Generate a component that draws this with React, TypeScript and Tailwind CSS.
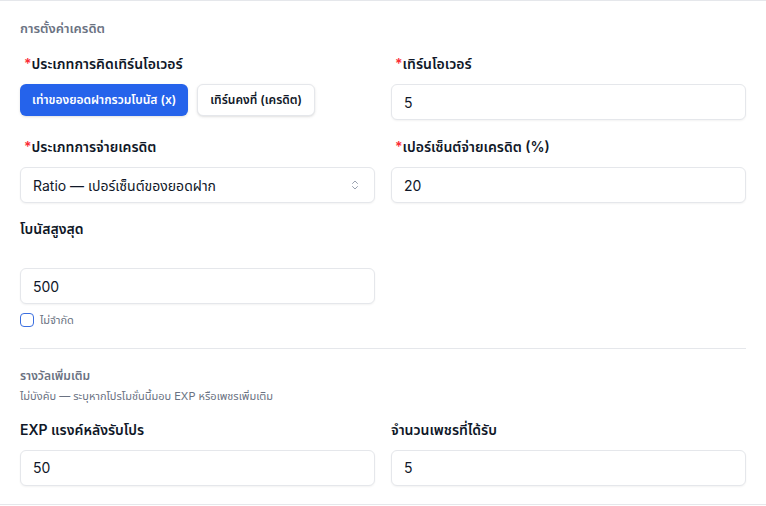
import { useState } from 'react'

function Label({ text, required }: { text: string; required?: boolean }) {
  return (
    <p className="text-[14px] font-semibold text-gray-900 leading-5">
      {required && <span className="ml-1 text-red-500">*</span>}
      {text}
    </p>
  )
}

function Field({ value }: { value: string }) {
  return (
    <input
      defaultValue={value}
      className="h-[36px] w-full rounded-md border border-gray-200 bg-white px-3 text-[14px] text-gray-900 shadow-[0_1px_2px_rgba(0,0,0,0.05)] outline-none"
    />
  )
}

export default function App() {
  const [mode, setMode] = useState<'x' | 'fixed'>('x')
  const [unlimited, setUnlimited] = useState(false)

  return (
    <div
      className="min-h-[506px] w-full bg-white"
      style={{ fontFamily: 'Inter, "Noto Sans", "Noto Sans Thai", sans-serif' }}
    >
      <div className="border-y border-gray-200 px-5 pt-[17px] pb-[18px]">
        {/* ── credit settings ── */}
        <p className="text-[13px] font-semibold text-gray-500 leading-5">การตั้งค่าเครดิต</p>

        <div className="mt-[16px] grid grid-cols-2 gap-x-4">
          <div>
            <Label text="ประเภทการคิดเทิร์นโอเวอร์" required />
            <div className="mt-[10px] flex gap-[9px]">
              <button
                onClick={() => setMode('x')}
                className={`h-[32px] rounded-md px-3 text-[12px] font-semibold ${
                  mode === 'x'
                    ? 'bg-[#2563eb] text-white shadow-sm'
                    : 'border border-gray-200 bg-white text-gray-900 shadow-sm'
                }`}
              >
                เท่าของยอดฝากรวมโบนัส (x)
              </button>
              <button
                onClick={() => setMode('fixed')}
                className={`h-[32px] rounded-md px-3 text-[12px] font-semibold ${
                  mode === 'fixed'
                    ? 'bg-[#2563eb] text-white shadow-sm'
                    : 'border border-gray-200 bg-white text-gray-900 shadow-sm'
                }`}
              >
                เทิร์นคงที่ (เครดิต)
              </button>
            </div>
          </div>
          <div>
            <Label text="เทิร์นโอเวอร์" required />
            <div className="mt-[10px]">
              <Field value="5" />
            </div>
          </div>
        </div>

        <div className="mt-[17px] grid grid-cols-2 gap-x-4">
          <div>
            <Label text="ประเภทการจ่ายเครดิต" required />
            <div className="relative mt-[10px]">
              <select className="h-[36px] w-full appearance-none rounded-md border border-gray-200 bg-white px-3 text-[14px] text-gray-900 shadow-[0_1px_2px_rgba(0,0,0,0.05)] outline-none">
                <option>Ratio — เปอร์เซ็นต์ของยอดฝาก</option>
              </select>
              <svg
                className="pointer-events-none absolute right-[14px] top-1/2 h-3 w-3 -translate-y-1/2 text-gray-400"
                viewBox="0 0 24 24"
                fill="none"
                stroke="currentColor"
                strokeWidth={2}
                strokeLinecap="round"
                strokeLinejoin="round"
              >
                <path d="m7 15 5 5 5-5" />
                <path d="m7 9 5-5 5 5" />
              </svg>
            </div>
          </div>
          <div>
            <Label text="เปอร์เซ็นต์จ่ายเครดิต (%)" required />
            <div className="mt-[10px]">
              <Field value="20" />
            </div>
          </div>
        </div>

        <div className="mt-[16px] grid grid-cols-2 gap-x-4">
          <div>
            <Label text="โบนัสสูงสุด" />
            <div className="mt-[29px]">
              <Field value="500" />
            </div>
            <label className="mt-[8px] flex items-center gap-1.5">
              <input
                type="checkbox"
                checked={unlimited}
                onChange={() => setUnlimited(!unlimited)}
                className="h-[14px] w-[14px] appearance-none rounded-[4px] border-[1.5px] border-[#3b6fe0] bg-white"
              />
              <span className="text-[11px] text-gray-500">ไม่จำกัด</span>
            </label>
          </div>
          <div />
        </div>

        <div className="mt-[19px] border-t border-gray-200" />

        {/* ── extra rewards ── */}
        <div className="pt-[19px]">
          <p className="text-[12px] font-semibold text-gray-500 leading-4">รางวัลเพิ่มเติม</p>
          <p className="mt-[4px] text-[11px] text-gray-500 leading-4">
            ไม่บังคับ — ระบุหากโปรโมชั่นนี้มอบ EXP หรือเพชรเพิ่มเติม
          </p>
        </div>

        <div className="mt-[16px] grid grid-cols-2 gap-x-4">
          <div>
            <Label text="EXP แรงค์หลังรับโปร" />
            <div className="mt-[10px]">
              <Field value="50" />
            </div>
          </div>
          <div>
            <Label text="จำนวนเพชรที่ได้รับ" />
            <div className="mt-[10px]">
              <Field value="5" />
            </div>
          </div>
        </div>
      </div>
    </div>
  )
}
